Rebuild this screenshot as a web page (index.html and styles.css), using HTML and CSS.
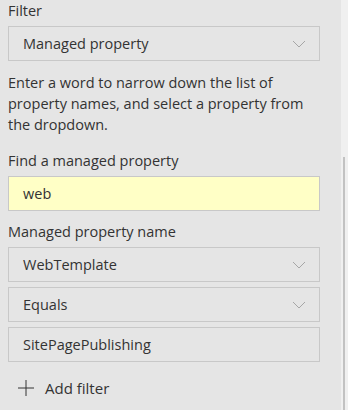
FILE: index.html
```html
<!DOCTYPE html>
<html lang="en">
<head>
<meta charset="UTF-8" />
<meta name="viewport" content="width=device-width, initial-scale=1" />
<title>Filter</title>
<link rel="stylesheet" href="styles.css">
</head>
<body>

  <div class="panel">
    <div class="panel-body">

      <!-- Filter type -->
      <div class="field">
        <label class="field-label">Filter</label>
        <div class="dropdown">
          <span class="dropdown-text">Managed property</span>
          <svg class="chevron" viewBox="0 0 14 8" aria-hidden="true"><path d="M1 1 L7 7 L13 1" /></svg>
        </div>
      </div>

      <p class="help-text">Enter a word to narrow down the list of property names, and select a property from the dropdown.</p>

      <!-- Search box -->
      <div class="field">
        <label class="field-label">Find a managed property</label>
        <div class="textbox textbox-highlight">web</div>
      </div>

      <!-- Property picker -->
      <div class="field">
        <label class="field-label">Managed property name</label>
        <div class="stack">
          <div class="dropdown">
            <span class="dropdown-text">WebTemplate</span>
            <svg class="chevron" viewBox="0 0 14 8" aria-hidden="true"><path d="M1 1 L7 7 L13 1" /></svg>
          </div>
          <div class="dropdown">
            <span class="dropdown-text">Equals</span>
            <svg class="chevron" viewBox="0 0 14 8" aria-hidden="true"><path d="M1 1 L7 7 L13 1" /></svg>
          </div>
          <div class="textbox">SitePagePublishing</div>
        </div>
      </div>

      <button class="add-btn" type="button">
        <svg class="plus" viewBox="0 0 16 16" aria-hidden="true"><path d="M8 0 V16 M0 8 H16" /></svg>
        <span>Add filter</span>
      </button>
    </div>

    <!-- Scrollbar track -->
    <div class="scroll-track"><div class="scroll-thumb"></div></div>
  </div>

</body>
</html>
```

FILE: styles.css
```css
/* Base */
body {
  margin: 0;
  background: #ffffff;
  font-family: 'Open Sans', 'Noto Sans', sans-serif;
  font-size: 14px;
  color: #333333;
}

/* Panel with its scrollbar */
.panel {
  display: flex;
  height: 410px;
  background: #e5e5e5;
}

.panel-body {
  flex: 1;
  padding: 1px 21px 0 8px;
}

.scroll-track {
  width: 5px;
  background: #f0f0f0;
  display: flex;
  flex-direction: column;
  justify-content: flex-end;
  padding-left: 2px;
}
.scroll-thumb {
  width: 2px;
  height: 253px;
  background: #c2c2c2;
}

/* Fields */
.field {
  display: flex;
  flex-direction: column;
  gap: 5px;
}

.field-label {
  line-height: 20px;
  font-size: 14.5px;
}

.stack {
  display: flex;
  flex-direction: column;
  gap: 5px;
}

.dropdown,
.textbox {
  box-sizing: border-box;
  height: 35px;
  border: 1px solid #c8c8c8;
  display: flex;
  align-items: center;
  padding: 0 13px 0 14px;
  font-size: 14.5px;
}

.dropdown {
  justify-content: space-between;
}

.textbox-highlight {
  background: #ffffc6;
}

.chevron {
  width: 14px;
  height: 8px;
  fill: none;
  stroke: #a6a6a6;
  stroke-width: 1;
}

.help-text {
  margin: 11px 0 16px;
  line-height: 21px;
  font-size: 14.5px;
}

.field + .field {
  margin-top: 11px;
}

/* Add filter */
.add-btn {
  margin-top: 14px;
  display: flex;
  align-items: center;
  gap: 11px;
  padding: 0 0 0 10px;
  background: none;
  border: none;
  font-family: inherit;
  font-size: 15px;
  color: #333333;
  height: 24px;
}

.plus {
  width: 16px;
  height: 16px;
  fill: none;
  stroke: #333333;
  stroke-width: 1;
}
```
